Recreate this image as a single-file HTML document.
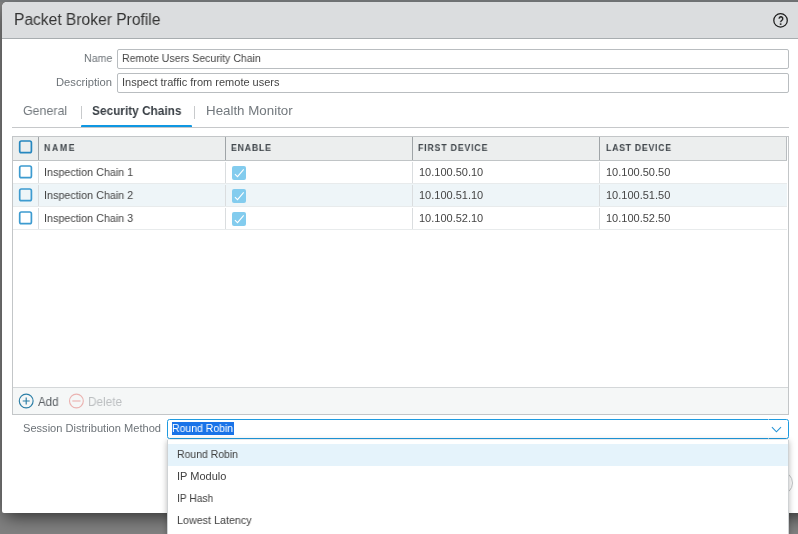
<!DOCTYPE html>
<html>
<head>
<meta charset="utf-8">
<title>Packet Broker Profile</title>
<style>
*{box-sizing:border-box;margin:0;padding:0}
html,body{width:798px;height:534px;overflow:hidden}
body{background:#818181;font-family:"Liberation Sans",sans-serif;font-size:11px;color:#4a4a4a;position:relative}
.a{position:absolute}
.x{position:absolute;display:inline-block;white-space:nowrap;transform-origin:0 50%;will-change:transform}
.strip{left:0;top:0;width:798px;height:2px;background:rgba(90,105,110,.25)}
.lstrip{left:0;top:0;width:3px;height:534px;background:#666}
.dlg{left:2px;top:2px;width:830px;height:511px;background:#fff;border-radius:5px 5px 2px 2px;box-shadow:0 6px 18px -3px rgba(0,0,0,.68)}
.hdr{left:2px;top:2px;width:830px;height:37px;background:#dbdddf;border-bottom:1px solid #a8adb0;border-radius:5px 5px 0 0}
.help{left:773px;top:13px;width:14px;height:14px;border:1.4px solid #1d1d1d;border-radius:50%}
.inp{left:117px;width:672px;height:20px;border:1px solid #b9bdc0;border-radius:2px;background:#fff}
.sep{top:106px;width:1px;height:13px;background:#c8cacc}
.tabline{left:12px;top:127px;width:777px;height:1px;background:#c6c8ca}
.tabul{left:81px;top:125px;width:111px;height:2px;background:#0f97e2;border-radius:1px 1px 0 0}
.grid{left:12px;top:136px;width:777px;height:279px;border:1px solid #c3c6c8;background:#fff}
.gh{left:13px;top:137px;width:774px;height:24px;background:#eceeee;border-bottom:1px solid #c0c4c6}
.hs{top:137px;width:1px;height:23px;background:#9fa4a7}
.row{left:13px;width:774px;height:23px;border-bottom:1px solid #e8ebec}
.alt{background:#eef5f8}
.rs{width:1px;height:21px;background:#dadddf}
.cb{left:19px;width:13.5px;height:13.5px;border:1.7px solid #3a98cc;border-radius:2px}
.ck{left:232px;width:14px;height:14px;border-radius:2px;background:#83ccee}
.tb{left:13px;top:387px;width:775px;height:27px;background:#f5f7f7;border-top:1px solid #d4d7d9}
.combo{left:167px;top:419px;width:622px;height:20px;border:1px solid #1f9be0;border-radius:2.5px;background:#fff}
.sel{left:172px;top:422px;width:62px;height:13px;background:#1a73e8}
.list{left:167px;top:440px;width:622px;height:120px;background:#fff;border-left:1px solid #cfd2d4;border-right:1px solid #cfd2d4;box-shadow:0 1px 6px rgba(0,0,0,.28);z-index:3}
.hi{left:168px;top:444px;width:620px;height:22px;background:#e5f3fb;z-index:4}
.btn{left:733px;top:471px;width:60px;height:24px;border:1px solid #c3c6c8;border-radius:12px;background:#fff}
</style>
</head>
<body>
<div class="a dlg"></div>
<div class="a strip"></div>
<div class="a hdr"></div>
<svg class="a" style="left:772px;top:12px" width="17" height="17" viewBox="0 0 17 17"><circle cx="8.55" cy="8.4" r="6.75" fill="none" stroke="#1c1c1c" stroke-width="1.25"/></svg>

<div class="a inp" style="top:49px"></div>
<div class="a inp" style="top:73px"></div>

<div class="a sep" style="left:81px"></div>
<div class="a sep" style="left:194px"></div>
<div class="a tabline"></div>
<div class="a tabul"></div>

<div class="a grid"></div>
<div class="a gh"></div>
<div class="a hs" style="left:38px"></div>
<div class="a hs" style="left:225px"></div>
<div class="a hs" style="left:412px"></div>
<div class="a hs" style="left:599px"></div>
<div class="a hs" style="left:786px;background:#b9bdc0"></div>
<svg class="a" style="left:18px;top:139px" width="16" height="16" viewBox="0 0 16 16"><rect x="1.7" y="2.0" width="11.7" height="11.7" rx="1.7" fill="none" stroke="#2687bf" stroke-width="1.7"/></svg>

<div class="a row" style="top:161px"></div>
<div class="a row alt" style="top:184px"></div>
<div class="a row" style="top:207px"></div>
<div class="a rs" style="left:38px;top:162px"></div>
<div class="a rs" style="left:225px;top:162px"></div>
<div class="a rs" style="left:412px;top:162px"></div>
<div class="a rs" style="left:599px;top:162px"></div>
<svg class="a" style="left:18px;top:164px" width="16" height="16" viewBox="0 0 16 16"><rect x="1.7" y="2.0" width="11.7" height="11.7" rx="1.7" fill="none" stroke="#3d9bd0" stroke-width="1.7"/></svg>
<div class="a ck" style="top:166px"></div><svg class="a" style="left:232px;top:166px" width="14" height="14" viewBox="0 0 14 14"><path d="M2.9 8.2 L5.5 10.7 L11.7 3.4" fill="none" stroke="#fff" stroke-width="1.05"/></svg>
<div class="a rs" style="left:38px;top:185px"></div>
<div class="a rs" style="left:225px;top:185px"></div>
<div class="a rs" style="left:412px;top:185px"></div>
<div class="a rs" style="left:599px;top:185px"></div>
<svg class="a" style="left:18px;top:187px" width="16" height="16" viewBox="0 0 16 16"><rect x="1.7" y="2.0" width="11.7" height="11.7" rx="1.7" fill="none" stroke="#3d9bd0" stroke-width="1.7"/></svg>
<div class="a ck" style="top:189px"></div><svg class="a" style="left:232px;top:189px" width="14" height="14" viewBox="0 0 14 14"><path d="M2.9 8.2 L5.5 10.7 L11.7 3.4" fill="none" stroke="#fff" stroke-width="1.05"/></svg>
<div class="a rs" style="left:38px;top:208px"></div>
<div class="a rs" style="left:225px;top:208px"></div>
<div class="a rs" style="left:412px;top:208px"></div>
<div class="a rs" style="left:599px;top:208px"></div>
<svg class="a" style="left:18px;top:210px" width="16" height="16" viewBox="0 0 16 16"><rect x="1.7" y="2.0" width="11.7" height="11.7" rx="1.7" fill="none" stroke="#3d9bd0" stroke-width="1.7"/></svg>
<div class="a ck" style="top:212px"></div><svg class="a" style="left:232px;top:212px" width="14" height="14" viewBox="0 0 14 14"><path d="M2.9 8.2 L5.5 10.7 L11.7 3.4" fill="none" stroke="#fff" stroke-width="1.05"/></svg>

<div class="a tb"></div>
<svg class="a" style="left:18px;top:393px" width="16" height="16" viewBox="0 0 16 16"><circle cx="8.2" cy="8" r="6.9" fill="none" stroke="#2b7ea6" stroke-width="1.15"/><path d="M4.7 8H11.7M8.2 4.5V11.5" stroke="#2b7ea6" stroke-width="1.15" fill="none"/></svg>
<svg class="a" style="left:68px;top:393px" width="16" height="16" viewBox="0 0 16 16"><circle cx="8.4" cy="8" r="6.9" fill="none" stroke="#ebb3b1" stroke-width="1.15"/><path d="M4.3 8H12.5" stroke="#ebb3b1" stroke-width="1.15" fill="none"/></svg>

<div class="a combo"></div>
<div class="a sel"></div>
<div class="a" style="left:768px;top:419px;width:1px;height:1px;background:rgba(255,255,255,.55)"></div><div class="a" style="left:768px;top:438px;width:1px;height:1px;background:rgba(255,255,255,.55)"></div>
<svg class="a" style="left:770px;top:425px" width="13" height="9" viewBox="0 0 13 9"><path d="M1.9 2.1 L6.45 6.8 L11 2.1" fill="none" stroke="#2594d6" stroke-width="1.05"/></svg>
<div class="a btn"></div>
<div class="a list"></div>
<div class="a hi"></div>
<span class="x" style="left:14.0px;top:9.96px;font-size:16px;line-height:19px;transform-origin:0 15.04px;transform:scaleX(0.9742);color:#333">Packet Broker Profile</span>
<span class="x" style="left:778.0px;top:13.74px;font-size:12px;line-height:14px;transform-origin:0 11.16px;transform:scaleX(0.7898);color:#111;font-weight:bold">?</span>
<span class="x" style="left:83.6px;top:51.69px;font-size:11px;line-height:13px;transform-origin:0 10.31px;transform:scaleX(0.9678);color:#6d7378">Name</span>
<span class="x" style="left:56.0px;top:75.69px;font-size:11px;line-height:13px;transform-origin:0 10.31px;transform:scaleX(1.0176);color:#6d7378">Description</span>
<span class="x" style="left:122.4px;top:51.69px;font-size:11px;line-height:13px;transform-origin:0 10.31px;transform:scaleX(0.9580);color:#454545">Remote Users Security Chain</span>
<span class="x" style="left:122.4px;top:75.69px;font-size:11px;line-height:13px;transform-origin:0 10.31px;transform:scaleX(0.9992);color:#454545">Inspect traffic from remote users</span>
<span class="x" style="left:23.0px;top:102.50px;font-size:13px;line-height:16px;transform-origin:0 12.50px;transform:scaleX(0.9557);color:#72787d">General</span>
<span class="x" style="left:91.8px;top:102.50px;font-size:13px;line-height:16px;transform-origin:0 12.50px;transform:scaleX(0.9108);color:#3a4046;font-weight:bold">Security Chains</span>
<span class="x" style="left:205.8px;top:102.50px;font-size:13px;line-height:16px;transform-origin:0 12.50px;transform:scaleX(1.0255);color:#72787d">Health Monitor</span>
<span class="x" style="left:44.4px;top:141.53px;font-size:10px;line-height:12px;transform-origin:0 9.46px;transform:scale(0.8800,0.875);color:#42484d;font-weight:bold;;letter-spacing:1.773px">NAME</span>
<span class="x" style="left:231.3px;top:141.53px;font-size:10px;line-height:12px;transform-origin:0 9.46px;transform:scale(0.8800,0.875);color:#42484d;font-weight:bold;;letter-spacing:0.843px">ENABLE</span>
<span class="x" style="left:418.4px;top:141.53px;font-size:10px;line-height:12px;transform-origin:0 9.46px;transform:scale(0.8800,0.875);color:#42484d;font-weight:bold;;letter-spacing:0.905px">FIRST DEVICE</span>
<span class="x" style="left:605.8px;top:141.53px;font-size:10px;line-height:12px;transform-origin:0 9.46px;transform:scale(0.8800,0.875);color:#42484d;font-weight:bold;;letter-spacing:0.774px">LAST DEVICE</span>
<span class="x" style="left:44.4px;top:165.69px;font-size:11px;line-height:13px;transform-origin:0 10.31px;transform:scaleX(0.9789);color:#454545">Inspection Chain 1</span>
<span class="x" style="left:418.6px;top:165.69px;font-size:11px;line-height:13px;transform-origin:0 10.31px;transform:scaleX(0.9995);color:#454545">10.100.50.10</span>
<span class="x" style="left:605.8px;top:165.69px;font-size:11px;line-height:13px;transform-origin:0 10.31px;transform:scaleX(1.0010);color:#454545">10.100.50.50</span>
<span class="x" style="left:44.4px;top:188.69px;font-size:11px;line-height:13px;transform-origin:0 10.31px;transform:scaleX(0.9789);color:#454545">Inspection Chain 2</span>
<span class="x" style="left:418.6px;top:188.69px;font-size:11px;line-height:13px;transform-origin:0 10.31px;transform:scaleX(0.9995);color:#454545">10.100.51.10</span>
<span class="x" style="left:605.8px;top:188.69px;font-size:11px;line-height:13px;transform-origin:0 10.31px;transform:scaleX(1.0010);color:#454545">10.100.51.50</span>
<span class="x" style="left:44.4px;top:211.69px;font-size:11px;line-height:13px;transform-origin:0 10.31px;transform:scaleX(0.9789);color:#454545">Inspection Chain 3</span>
<span class="x" style="left:418.6px;top:211.69px;font-size:11px;line-height:13px;transform-origin:0 10.31px;transform:scaleX(0.9995);color:#454545">10.100.52.10</span>
<span class="x" style="left:605.8px;top:211.69px;font-size:11px;line-height:13px;transform-origin:0 10.31px;transform:scaleX(1.0010);color:#454545">10.100.52.50</span>
<span class="x" style="left:37.6px;top:394.67px;font-size:12.5px;line-height:15px;transform-origin:0 11.83px;transform:scaleX(0.9258);color:#5b6065">Add</span>
<span class="x" style="left:88.0px;top:394.67px;font-size:12.5px;line-height:15px;transform-origin:0 11.83px;transform:scaleX(0.9408);color:#bcbfc1">Delete</span>
<span class="x" style="left:23.2px;top:421.69px;font-size:11px;line-height:13px;transform-origin:0 10.31px;transform:scaleX(1.0075);color:#6d7378">Session Distribution Method</span>
<span class="x" style="left:172.4px;top:421.69px;font-size:11px;line-height:13px;transform-origin:0 10.31px;transform:scaleX(0.9514);color:#fff">Round Robin</span>
<span class="x" style="left:177.4px;top:447.69px;font-size:11px;line-height:13px;transform-origin:0 10.31px;transform:scaleX(0.9499);color:#404040;z-index:5">Round Robin</span>
<span class="x" style="left:177.4px;top:469.69px;font-size:11px;line-height:13px;transform-origin:0 10.31px;transform:scaleX(0.9933);color:#404040;z-index:5">IP Modulo</span>
<span class="x" style="left:177.4px;top:491.69px;font-size:11px;line-height:13px;transform-origin:0 10.31px;transform:scaleX(0.9323);color:#404040;z-index:5">IP Hash</span>
<span class="x" style="left:177.4px;top:513.69px;font-size:11px;line-height:13px;transform-origin:0 10.31px;transform:scaleX(0.9760);color:#404040;z-index:5">Lowest Latency</span>
</body>
</html>
